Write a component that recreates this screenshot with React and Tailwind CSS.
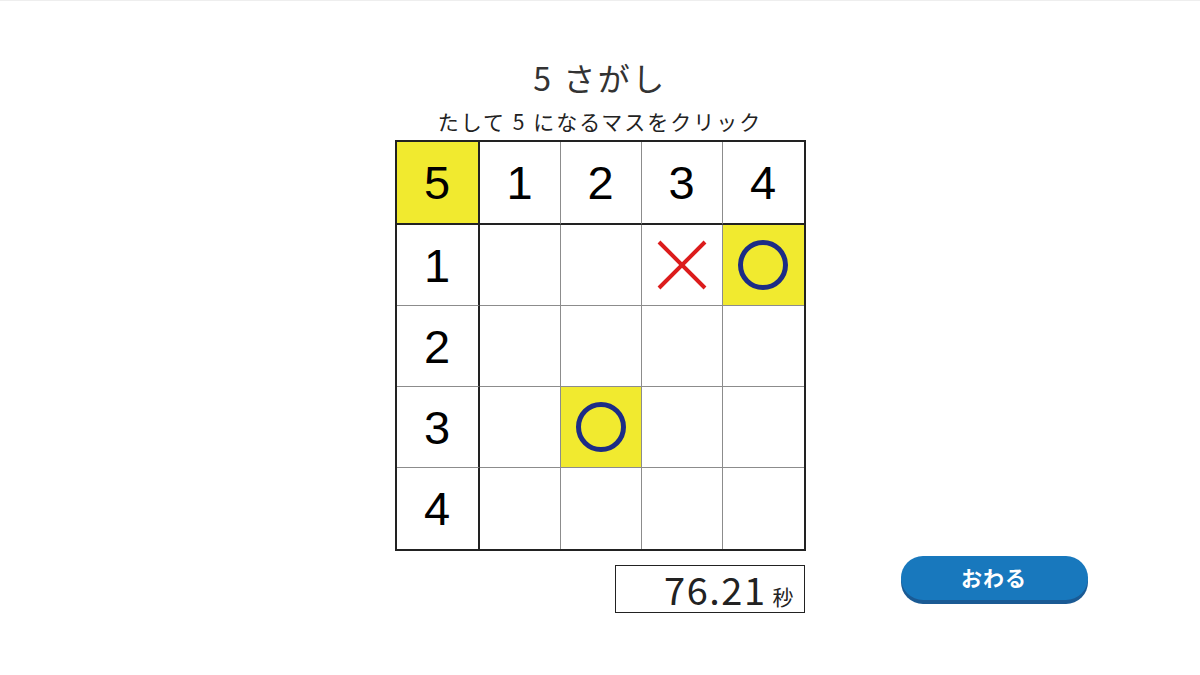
import React from "react";

const YEL = "bg-[#f1ea2f]";

function Circle() {
  return (
    <svg width="52" height="52" viewBox="0 0 52 52">
      <circle cx="26" cy="26" r="22.5" fill="none" stroke="#1c2c86" strokeWidth="5" />
    </svg>
  );
}

function Cross() {
  return (
    <svg width="50" height="50" viewBox="0 0 50 50">
      <path d="M2 2 L48 48 M48 2 L2 48" stroke="#dc1c1c" strokeWidth="4" strokeLinecap="butt" />
    </svg>
  );
}

export default function App() {
  const header = ["5", "1", "2", "3", "4"];
  const marks = {
    "1-4": "o",
    "1-3": "x",
    "3-2": "o",
  };
  const rows = [0, 1, 2, 3, 4];
  const cols = [0, 1, 2, 3, 4];

  const cellClass = (r, c) => {
    const w = c === 0 ? "w-[83px] border-r-2 border-r-[#222]" : c === 4 ? "w-[81px]" : "w-[81px] border-r border-r-[#8c8c8c]";
    const h = r === 0 ? "h-[83px] border-b-2 border-b-[#222]" : r === 4 ? "h-[81px]" : "h-[81px] border-b border-b-[#8c8c8c]";
    return `${w} ${h} flex items-center justify-center`;
  };

  return (
    <div
      className="w-[1200px] h-[675px] bg-white border-t border-[#eeeeee] flex flex-col items-center"
      style={{ fontFamily: '"Noto Sans CJK JP", "Noto Sans", sans-serif' }}
    >
      <div className="mt-[56px] h-[40px] leading-[40px] text-[32px] tracking-[2.5px] text-[#333]">5 さがし</div>
      <div className="mt-[10px] h-[28px] leading-[28px] text-[21px] tracking-[2px] text-[#222]">たして 5 になるマスをクリック</div>
      <div className="mt-[5px] border-2 border-[#222] flex flex-col">
        {rows.map((r) => (
          <div key={r} className="flex">
            {cols.map((c) => {
              const mark = marks[`${r}-${c}`];
              const yellow = (r === 0 && c === 0) || mark === "o";
              let content = null;
              if (r === 0) content = header[c];
              else if (c === 0) content = String(r);
              return (
                <div key={c} className={`${cellClass(r, c)} ${yellow ? YEL : "bg-white"}`}>
                  {content !== null && (
                    <span
                      className="text-[47px] text-black leading-none"
                      style={{ fontFamily: '"Liberation Sans", Arial, sans-serif' }}
                    >
                      {content}
                    </span>
                  )}
                  {mark === "o" && <Circle />}
                  {mark === "x" && <Cross />}
                </div>
              );
            })}
          </div>
        ))}
      </div>
      <div className="w-full grid grid-cols-[1fr_411px_1fr]">
        <div />
        <div className="flex justify-end pr-[1px] pt-[14px]">
          <div className="w-[190px] h-[48px] border border-[#222] flex items-baseline justify-end pr-[10px] text-[#222]">
            <span className="text-[38px] leading-[46px] tracking-[1.5px]">76.21</span>
            <span className="text-[21px] ml-[6px]">秒</span>
          </div>
        </div>
        <div className="pt-[5px] pl-[95px]">
          <button className="w-[187px] h-[44px] rounded-full bg-[#1878bd] shadow-[0_4px_0_#1a5a94] text-white text-[21px] font-bold tracking-[1px] flex items-center justify-center">
            おわる
          </button>
        </div>
      </div>
    </div>
  );
}
